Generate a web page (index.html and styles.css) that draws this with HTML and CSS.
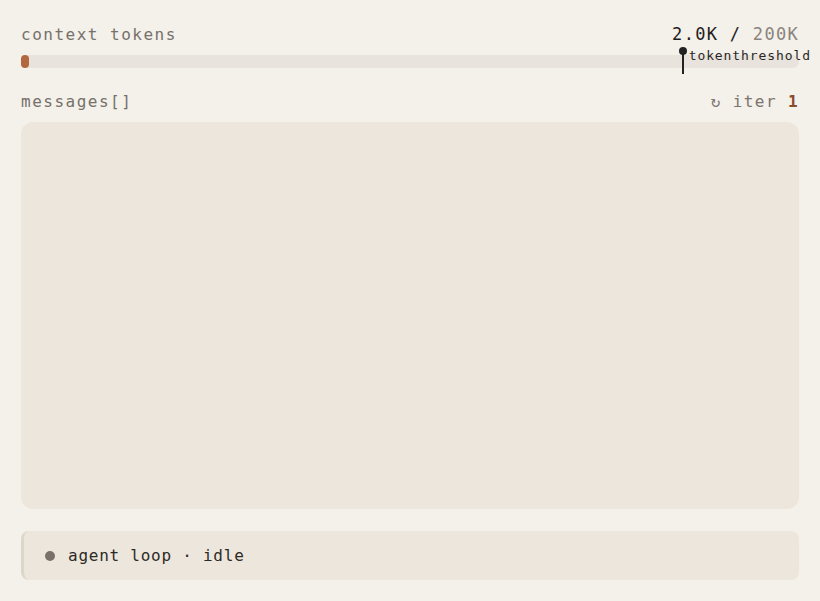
FILE: index.html
```html
<!DOCTYPE html>
<html>
<head>
<meta charset="utf-8">
<link rel="stylesheet" href="styles.css">
</head>
<body>
<div class="app">
  <div class="row head">
    <span class="label">context tokens</span>
    <span class="count"><span class="used">2.0K</span> / <span class="max">200K</span></span>
  </div>
  <div class="bar">
    <div class="fill" style="width:1%"></div>
    <div class="marker" style="left:85.05%">
      <span class="pin"></span>
      <span class="marker-label">tokenthreshold</span>
    </div>
  </div>
  <div class="row msgs-head">
    <span class="label">messages[]</span>
    <span class="iter">↻ iter <b>1</b></span>
  </div>
  <div class="messages"></div>
  <div class="status">
    <span class="dot"></span>
    <span class="status-text">agent loop · idle</span>
  </div>
</div>
</body>
</html>
```
FILE: styles.css
```css
* { box-sizing: border-box; }
html, body { margin: 0; padding: 0; }
body {
  background: #f4f0ea;
  font-family: "DejaVu Sans Mono", "Liberation Mono", monospace;
  color: #6f675f;
}
.app {
  padding: 24px 21px 21px 21px;
  display: flex;
  flex-direction: column;
  height: 601px;
}
.row {
  display: flex;
  justify-content: space-between;
  align-items: baseline;
}
.label {
  font-size: 16px;
  letter-spacing: 1.5px;
  color: #76706a;
}
.count {
  font-size: 17px;
  letter-spacing: 1.3px;
  color: #1f1d1b;
}
.count .max { color: #8a847d; }
.head { height: 22px; }
.bar {
  position: relative;
  margin-top: 9px;
  height: 13px;
  border-radius: 7px;
  background: #e8e3dc;
}
.fill {
  height: 100%;
  min-width: 7px;
  border-radius: 7px;
  background: #b3673f;
}
.marker {
  position: absolute;
  top: -4px;
  height: 23px;
  width: 2px;
  margin-left: -1px;
  background: #222;
}
.pin {
  position: absolute;
  left: -3px;
  top: -4px;
  width: 8px;
  height: 8px;
  border-radius: 50%;
  background: #222;
}
.marker-label {
  position: absolute;
  left: 7px;
  top: -3px;
  font-size: 13px;
  letter-spacing: 0.9px;
  color: #2a2826;
  white-space: nowrap;
}
.msgs-head { margin-top: 24px; height: 22px; }
.iter {
  font-size: 16px;
  letter-spacing: 1.4px;
  color: #7c756e;
}
.iter b { color: #8a4a2c; font-weight: bold; }
.messages {
  margin-top: 8px;
  height: 387px;
  background: #ede6dc;
  border-radius: 12px;
}
.status {
  margin-top: 22px;
  height: 49px;
  background: #ede6dc;
  border-left: 3px solid #ddd6ca;
  border-radius: 8px;
  display: flex;
  align-items: center;
  padding-left: 21px;
}
.dot {
  width: 10px;
  height: 10px;
  border-radius: 50%;
  background: #7a716a;
}
.status-text {
  margin-left: 13px;
  font-size: 16px;
  letter-spacing: 0.75px;
  color: #2d2a26;
}
```
